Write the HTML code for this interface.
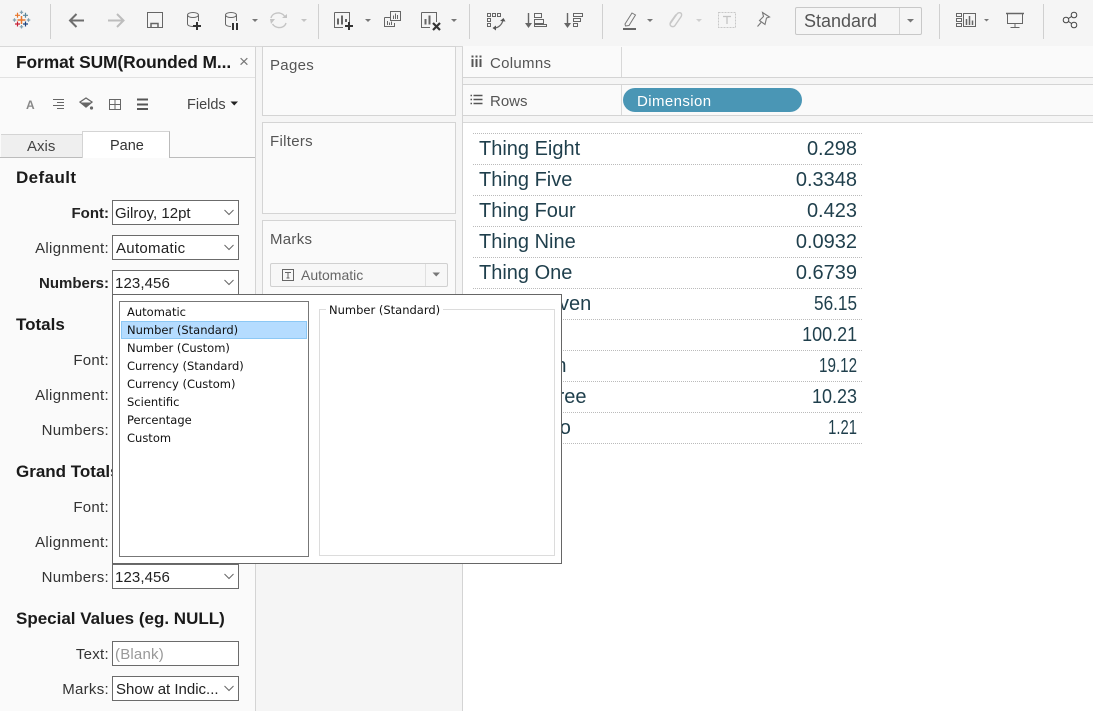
<!DOCTYPE html>
<html><head><meta charset="utf-8"><style>
html,body{margin:0;padding:0;width:1093px;height:711px;overflow:hidden;background:#f5f5f5}
body{position:relative;font-family:"Liberation Sans",sans-serif;color:#333}
.a{position:absolute;box-sizing:border-box}
.t{position:absolute;white-space:nowrap;line-height:20px}
.card{position:absolute;box-sizing:border-box;background:#fafafa;border:1px solid #d4d4d4}
.h{position:absolute;left:16px;font-weight:bold;font-size:17px;color:#1a1a1a;line-height:20px;white-space:nowrap}
.l{position:absolute;right:984px;font-size:15px;letter-spacing:.3px;color:#333;line-height:20px;white-space:nowrap}
.b{font-weight:bold;color:#222;letter-spacing:0}
.dd{position:absolute;left:112px;width:127px;height:25px;box-sizing:border-box;border:1px solid #6b6b6b;background:#fff;font-size:15px;line-height:25px;padding-left:2px;color:#222;white-space:nowrap}
.dd svg{position:absolute;right:4px;top:8px}
.g{position:absolute;left:479px;font-family:"Liberation Sans",sans-serif;font-size:20px;color:#1f3f4c;line-height:24px;white-space:nowrap}
.n{position:absolute;right:236px;font-size:20px;color:#1f3f4c;line-height:24px;white-space:nowrap;transform-origin:100% 50%}
.d{position:absolute;left:473px;width:389px;height:0;border-top:1px dotted #bbb}
.p{position:absolute;left:127px;font-family:"DejaVu Sans",sans-serif;font-size:11.5px;line-height:18px;color:#111;white-space:nowrap}
.s{font-size:15px;letter-spacing:.3px;color:#555}
</style></head><body>

<svg class="a" style="left:0;top:0" width="1093" height="46" viewBox="0 0 1093 46" fill="none">
<g stroke="#d0d0d0" stroke-width="1"><path d="M50.5 4V39M318.5 4V39M469.5 4V39M602.5 4V39M939.5 4V39M1043.5 4V39"/></g>
<!-- logo -->
<g stroke-width="1.2">
<path d="M21.5 16v8M17.5 20h8" stroke="#e8762b" stroke-width="1.5"/>
<path d="M17.500 12.800v5M15 15.300h5" stroke="#e8762b"/>
<path d="M25.500 12.800v5M23 15.300h5" stroke="#5b879b"/>
<path d="M17.500 21.500v5M15 24h5" stroke="#c72035"/>
<path d="M25.500 21.500v5M23 24h5" stroke="#1f447e"/>
<path d="M21.500 10.500v3.500M19.700 12.300h3.500M21.500 25v3.500M19.700 26.800h3.500M14.500 18.300v3.500M12.800 20h3.500M28.500 18.300v3.500M26.800 20h3.500" stroke="#7f9fb0"/>
</g>
<!-- back / forward -->
<path d="M70 20.500H84M76.500 14L70 20.500L76.500 27" stroke="#6e6e6e" stroke-width="2"/>
<path d="M108 20.500H123M117 14L123.500 20.500L117 27" stroke="#bdbdbd" stroke-width="2"/>
<!-- save -->
<path d="M147.500 12.500H162.500V27.500H147.500Z" stroke="#666" stroke-width="1"/><path d="M151 27V23.500H158V27" stroke="#666" stroke-width="1.500"/>
<!-- db add -->
<path d="M187.500 15.500V24C187.500 25.500 190 26.500 193 26.500M198.500 15.500V21" stroke="#666"/><ellipse cx="193" cy="15" rx="5.500" ry="2.500" stroke="#666"/>
<path d="M197 22V30M193 26H201" stroke="#333" stroke-width="2"/>
<!-- db pause -->
<path d="M225.500 15.500V24C225.500 25.500 228 26.500 231 26.500M236.500 15.500V21" stroke="#666"/><ellipse cx="231" cy="15" rx="5.500" ry="2.500" stroke="#666"/>
<path d="M233 23V30M237 23V30" stroke="#333" stroke-width="2"/>
<path d="M252 19h6l-3 3z" fill="#777"/>
<!-- refresh -->
<path d="M271 18C272 14 276 12.500 279.500 13C282 13.500 284 15 285 17M286 23C285 26.500 281.500 28 278 27.500C275.500 27 273.500 25.500 272.500 24" stroke="#c4c4c4" stroke-width="1.400"/><path d="M282 18H287V14ZM270 19H275L271 24Z" fill="#c4c4c4"/>
<path d="M301 19h6l-3 3z" fill="#c4c4c4"/>
<!-- new sheet -->
<path d="M334.500 12.500H349.500V25M343 27.500H334.500V12.500" stroke="#666"/><path d="M338 18.500V24.500M342 15.500V24.500M346 19V22" stroke="#666" stroke-width="2"/><path d="M349 22V30M345 26H353" stroke="#333" stroke-width="2"/>
<path d="M365 19h6l-3 3z" fill="#777"/>
<!-- dup -->
<path d="M384.500 17.500H390M384.500 17.500V26.500H394.500V23" stroke="#666"/><path d="M390.500 11.500H400.500V20.500H390.500Z" stroke="#666"/><path d="M393.500 15.500V19M395.500 13.500V19M397.500 15V19M387.500 21V25M389.500 22.500V25M391.500 21.500V25" stroke="#666"/>
<!-- clear -->
<path d="M421.500 12.500H436.500V22M430 27.500H421.500V12.500" stroke="#666"/><path d="M425.500 19V24.500M429.500 15.500V24.500" stroke="#666" stroke-width="2"/><path d="M433 23L440 30M440 23L433 30" stroke="#333" stroke-width="2.200"/>
<path d="M451 19h6l-3 3z" fill="#777"/>
<!-- swap -->
<g stroke="#666"><path d="M487.500 13.500h3v3h-3zM492.500 13.500h3v3h-3zM497.500 13.500h3v3h-3zM487.500 18.500h3v3h-3zM487.500 23.500h3v3h-3z"/><path d="M494 28C498 28 502 25 503 20" stroke-width="1.200"/></g><path d="M500 21L503.500 18L505.500 21.500ZM496 25.500L492.500 28L496 30.500Z" fill="#555"/>
<!-- sort asc -->
<path d="M528.500 13V26" stroke="#666" stroke-width="1.400"/><path d="M525 23H532L528.500 28Z" fill="#666"/><path d="M534.500 13.500H541.500V17.500H534.500ZM534.500 19.500H543.500V23.500H534.500ZM534.500 24.500H546.500V26.500H534.500Z" stroke="#666"/>
<!-- sort desc -->
<path d="M567.500 13V26" stroke="#666" stroke-width="1.400"/><path d="M564 23H571L567.500 28Z" fill="#666"/><path d="M573.500 13.500H582.500V16.500H573.500ZM573.500 18.500H580.500V21.500H573.500ZM573.500 23.500H577.500V26.500H573.500Z" stroke="#666"/>
<!-- highlight -->
<path d="M625 24L632 13L635.500 15L629 25.500L625.500 26Z" stroke="#777"/><path d="M623 29H636" stroke="#666" stroke-width="2"/>
<path d="M647 19h6l-3 3z" fill="#777"/>
<!-- clip -->
<path d="M670 24L677 14C678.500 12 681 12.500 681.500 14C682 15.500 681.500 16 680.500 17.500L675 25.500C674 27 671.500 27 670.500 25.500C669.500 24 670 23 671 21.500L676 14.500" stroke="#c8c8c8" stroke-width="1.400"/>
<path d="M696 19h6l-3 3z" fill="#cfcfcf"/>
<!-- T box -->
<path d="M718.500 12.500H735.500V27.500H718.500Z" stroke="#c8c8c8" stroke-dasharray="2 1"/><path d="M723 16.500H731M727 16.500V24" stroke="#c4c4c4" stroke-width="1.300"/>
<!-- pin -->
<path d="M762.500 12.500L769.500 17L766.500 18L765 24.500L759.500 20.500L763.500 16.500ZM761 22.500L757.500 26.500" stroke="#777" stroke-width="1.100"/>
<!-- standard arrow -->
<path d="M907 19h7l-3.500 3.500z" fill="#777"/>
<!-- fit -->
<path d="M956.500 13.500H961.500V16.500H956.500ZM956.500 18.500H961.500V21.500H956.500ZM956.500 23.500H961.500V26.500H956.500Z" stroke="#666"/><path d="M963.500 13.500H975.500V26.500H963.500Z" stroke="#666"/><path d="M966.500 19V25M969.500 16V25M972.500 20.500V25" stroke="#666" stroke-width="1.500"/>
<path d="M984 19h5l-2.500 2.500z" fill="#777"/>
<!-- presentation -->
<path d="M1006 13.500H1024" stroke="#666" stroke-width="1.500"/><path d="M1007.500 14V23.500H1022.500V14M1015 23.500V27.500M1010.500 27.500H1019.500" stroke="#666"/>
<!-- share -->
<circle cx="1074" cy="15" r="2.800" stroke="#444"/><circle cx="1074" cy="25" r="2.800" stroke="#444"/><circle cx="1066" cy="20" r="2.800" stroke="#444"/><path d="M1068.500 18.500L1071.500 16.500M1068.500 21.500L1071.500 23.500" stroke="#444"/>
</svg>

<div class="a" style="left:795px;top:7px;width:127px;height:28px;border:1px solid #c8c8c8;border-radius:2px"></div>
<div class="a" style="left:899px;top:8px;width:1px;height:26px;background:#d4d4d4"></div>
<div class="t" style="left:804px;top:11px;font-size:18px;color:#555">Standard</div>

<div class="a" style="left:0;top:46px;width:1093px;height:1px;background:#d8d8d8"></div>

<!-- left panel -->
<div class="a" style="left:0;top:47px;width:256px;height:664px;background:#fafafa;border-right:1px solid #d4d4d4"></div>
<div class="t" style="left:16px;top:52px;font-size:17.400px;font-weight:bold;color:#1a1a1a;letter-spacing:-.1px">Format SUM(Rounded M...</div>
<div class="t" style="left:239px;top:52px;font-size:17px;color:#777">×</div>
<div class="a" style="left:0;top:77px;width:255px;height:1px;background:#e2e2e2"></div>
<svg class="a" style="left:0;top:90px" width="160" height="30" fill="none">
<text x="26" y="19" font-family="Liberation Sans" font-size="12" font-weight="bold" fill="#888">A</text>
<path d="M53 9.500H64M57 12.500H64M53 15.500H64M57 18.500H64" stroke="#666"/>
<path d="M80 12L86 8L92 12L86 17Z" stroke="#666" stroke-width="1.300"/><path d="M80 12.500H92L86 17.500Z" fill="#666"/><circle cx="91.500" cy="18" r="1.600" fill="#666"/>
<path d="M109.500 9.500H120.500V19.500H109.500ZM115 9.500V19.500M109.500 14.500H120.500" stroke="#666"/>
<path d="M137 9.500H148" stroke="#555" stroke-width="2"/><path d="M137 14.500H148" stroke="#555" stroke-width="2"/><path d="M137 19H148" stroke="#555" stroke-width="2"/>
</svg>
<div class="t" style="left:187px;top:94px;font-size:14.500px;color:#444;line-height:22px">Fields</div>
<svg class="a" style="left:230px;top:101px" width="9" height="6"><path d="M0.500 0.500H8L4.250 4.500Z" fill="#222"/></svg>

<div class="a" style="left:1px;top:134px;width:82px;height:24px;background:#efefef;border-top:1px solid #d4d4d4"></div>
<div class="t" style="left:27px;top:137px;font-size:15px;color:#444">Axis</div>
<div class="a" style="left:0;top:157px;width:255px;height:1px;background:#bcbcbc"></div>
<div class="a" style="left:82px;top:131px;width:88px;height:27px;background:#fff;border:1px solid #d4d4d4;border-bottom:0;border-right:1px solid #bbb"></div>
<div class="t" style="left:110px;top:136px;font-size:14.500px;color:#333">Pane</div>

<div class="h" style="top:168px;letter-spacing:.4px">Default</div>
<div class="l b" style="top:204px">Font:</div>
<div class="dd" style="top:200px">Gilroy, 12pt<svg width="10" height="7" fill="none"><path d="M.5 1L5 5.500L9.500 1" stroke="#666"/></svg></div>
<div class="l" style="top:239px">Alignment:</div>
<div class="dd" style="top:235px;padding-left:3px;letter-spacing:.3px">Automatic<svg width="10" height="7" fill="none"><path d="M.5 1L5 5.500L9.500 1" stroke="#666"/></svg></div>
<div class="l b" style="top:274px">Numbers:</div>
<div class="dd" style="top:270px;letter-spacing:.1px">123,456<svg width="10" height="7" fill="none"><path d="M.5 1L5 5.500L9.500 1" stroke="#666"/></svg></div>

<div class="h" style="top:315px">Totals</div>
<div class="l" style="top:351px">Font:</div>
<div class="l" style="top:386px">Alignment:</div>
<div class="l" style="top:421px">Numbers:</div>

<div class="h" style="top:462px">Grand Totals</div>
<div class="l" style="top:498px">Font:</div>
<div class="l" style="top:533px">Alignment:</div>
<div class="l" style="top:568px">Numbers:</div>
<div class="dd" style="top:564px;letter-spacing:.1px">123,456<svg width="10" height="7" fill="none"><path d="M.5 1L5 5.500L9.500 1" stroke="#666"/></svg></div>

<div class="h" style="top:609px">Special Values (eg. NULL)</div>
<div class="l" style="top:645px">Text:</div>
<div class="dd" style="top:641px;color:#999;letter-spacing:.2px">(Blank)</div>
<div class="l" style="top:680px">Marks:</div>
<div class="dd" style="top:676px;padding-left:3px">Show at Indic...<svg width="10" height="7" fill="none"><path d="M.5 1L5 5.500L9.500 1" stroke="#666"/></svg></div>

<!-- middle cards -->
<div class="card" style="left:262px;top:46px;width:194px;height:70px"></div>
<div class="t s" style="left:270px;top:56px">Pages</div>
<div class="card" style="left:262px;top:122px;width:194px;height:92px"></div>
<div class="t s" style="left:270px;top:132px">Filters</div>
<div class="card" style="left:262px;top:220px;width:194px;height:300px"></div>
<div class="t s" style="left:270px;top:230px">Marks</div>
<div class="a" style="left:270px;top:263px;width:178px;height:24px;border:1px solid #d0d0d0;border-radius:2px;background:#f7f7f7"></div>
<div class="a" style="left:425px;top:264px;width:1px;height:22px;background:#e0e0e0"></div>
<svg class="a" style="left:281px;top:268px" width="14" height="14" fill="none"><path d="M1.500 1.500H12.500V12.500H1.500Z" stroke="#666"/><path d="M4 4.500H10M7 4.500V10M5.500 10H8.500" stroke="#666"/></svg>
<div class="t" style="left:301px;top:265px;font-size:14px;color:#666">Automatic</div>
<svg class="a" style="left:432px;top:272px" width="9" height="6"><path d="M0.500 0.500H8L4.250 4.500Z" fill="#777"/></svg>

<!-- right -->
<div class="a" style="left:462px;top:47px;width:1px;height:664px;background:#d4d4d4"></div>
<div class="a" style="left:463px;top:46px;width:630px;height:32px;background:#fafafa;border-bottom:1px solid #d4d4d4"></div>
<div class="a" style="left:463px;top:84px;width:630px;height:32px;background:#fafafa;border-top:1px solid #d4d4d4;border-bottom:1px solid #d4d4d4"></div>
<div class="a" style="left:621px;top:47px;width:1px;height:30px;background:#d8d8d8"></div>
<div class="a" style="left:621px;top:85px;width:1px;height:30px;background:#d8d8d8"></div>
<svg class="a" style="left:470px;top:52px" width="14" height="60" fill="none" stroke="#555"><path d="M2.500 7V15M6.500 7V15M10.500 7V15" stroke-width="2"/><path d="M2.500 3.500V5.500M6.500 3.500V5.500M10.500 3.500V5.500" stroke-width="2"/><path d="M3.500 43.500H12.500M3.500 47.500H12.500M3.500 51.500H12.500" stroke-width="1.500"/><path d="M0.500 43.500H2M0.500 47.500H2M0.500 51.500H2" stroke-width="1.500"/></svg>
<div class="t s" style="left:490px;top:54px">Columns</div>
<div class="t s" style="left:490px;top:92px;letter-spacing:0">Rows</div>
<div class="a" style="left:623px;top:88px;width:179px;height:24px;border-radius:12px;background:#4a96b5"></div>
<div class="t" style="left:637px;top:92px;font-size:15px;letter-spacing:.4px;color:#fff">Dimension</div>

<!-- view -->
<div class="a" style="left:463px;top:122px;width:630px;height:589px;background:#fff;border-top:1px solid #d8d8d8"></div>
<div class="d" style="top:133px"></div><div class="d" style="top:164px"></div><div class="d" style="top:195px"></div><div class="d" style="top:226px"></div><div class="d" style="top:257px"></div><div class="d" style="top:288px"></div><div class="d" style="top:319px"></div><div class="d" style="top:350px"></div><div class="d" style="top:381px"></div><div class="d" style="top:412px"></div><div class="d" style="top:443px"></div>
<div class="g" style="top:137px">Thing Eight</div><div class="n" style="top:137px">0.298</div>
<div class="g" style="top:168px">Thing Five</div><div class="n" style="top:168px">0.3348</div>
<div class="g" style="top:199px">Thing Four</div><div class="n" style="top:199px">0.423</div>
<div class="g" style="top:230px">Thing Nine</div><div class="n" style="top:230px">0.0932</div>
<div class="g" style="top:261px">Thing One</div><div class="n" style="top:261px">0.6739</div>
<div class="g" style="top:292px">Thing Seven</div><div class="n" style="top:292px;transform:scaleX(.86)">56.15</div>
<div class="g" style="top:323px">Thing Six</div><div class="n" style="top:323px;transform:scaleX(.9)">100.21</div>
<div class="g" style="top:354px">Thing Ten</div><div class="n" style="top:354px;transform:scaleX(.76)">19.12</div>
<div class="g" style="top:385px">Thing Three</div><div class="n" style="top:385px;transform:scaleX(.9)">10.23</div>
<div class="g" style="top:416px">Thing Two</div><div class="n" style="top:416px;transform:scaleX(.74)">1.21</div>

<!-- popup -->
<div class="a" style="left:112px;top:294px;width:450px;height:270px;background:#fff;border:1px solid #666"></div>
<div class="a" style="left:119px;top:301px;width:190px;height:256px;background:#fff;border:1px solid #777"></div>
<div class="a" style="left:121px;top:321px;width:186px;height:18px;background:#b5dcff;border:1px solid #8cc8f5"></div>
<div class="p" style="top:303px">Automatic</div>
<div class="p" style="top:321px">Number (Standard)</div>
<div class="p" style="top:339px">Number (Custom)</div>
<div class="p" style="top:357px">Currency (Standard)</div>
<div class="p" style="top:375px">Currency (Custom)</div>
<div class="p" style="top:393px">Scientific</div>
<div class="p" style="top:411px">Percentage</div>
<div class="p" style="top:429px">Custom</div>
<div class="a" style="left:319px;top:309px;width:236px;height:247px;border:1px solid #dcdcdc"></div>
<div class="p" style="left:326px;top:302px;background:#fff;padding:0 3px;height:16px;line-height:17px">Number (Standard)</div>
</body></html>
